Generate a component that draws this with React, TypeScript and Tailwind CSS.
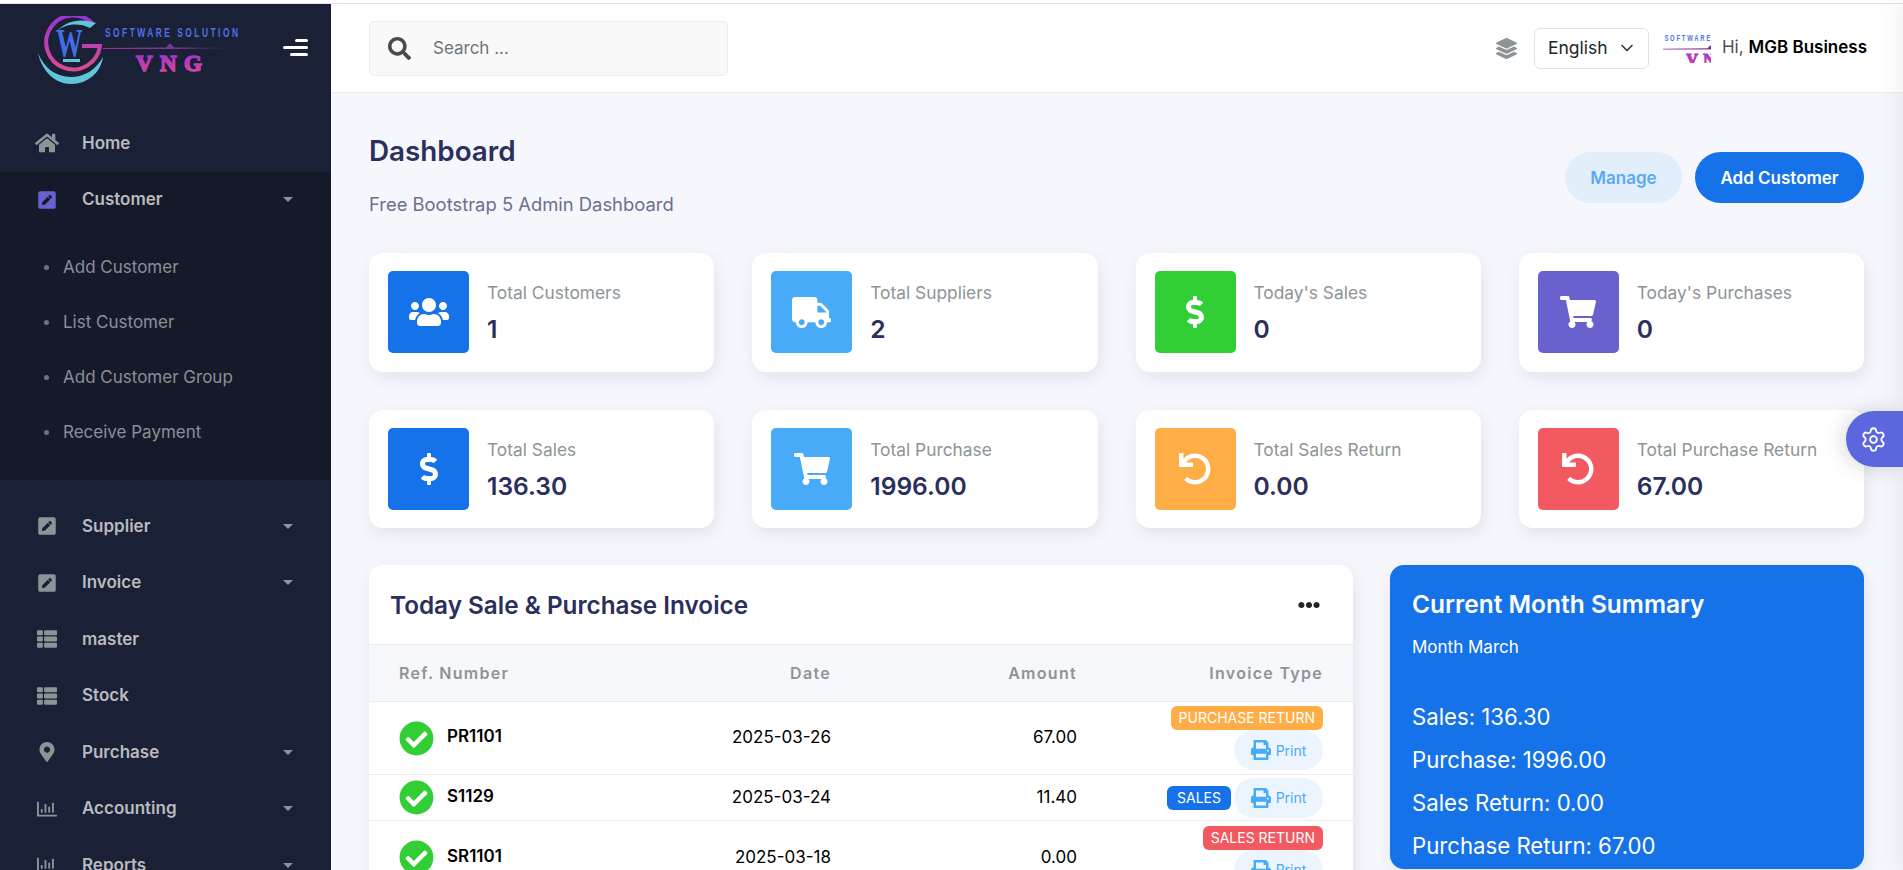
import React from 'react';
import {
  FaHome, FaPenSquare, FaThList, FaMapMarkerAlt, FaRegChartBar, FaSearch, FaLayerGroup,
  FaUsers, FaTruck, FaDollarSign, FaShoppingCart, FaUndo, FaEllipsisH, FaCheckCircle, FaPrint,
} from 'react-icons/fa';
import { ChevronDown, Settings } from 'lucide-react';

const font = { fontFamily: 'Inter, "Liberation Sans", sans-serif' };

const Logo = ({ viewBox, width, height, id }: { viewBox: string; width: number; height: number; id: string }) => (
  <svg viewBox={viewBox} width={width} height={height} preserveAspectRatio="none">
    <defs>
      <linearGradient id={`${id}-g`} x1="0" y1="0" x2="0" y2="1">
        <stop offset="0" stopColor="#9a32d6" />
        <stop offset="1" stopColor="#d84c8e" />
      </linearGradient>
      <linearGradient id={`${id}-l`} x1="0" y1="0" x2="1" y2="0">
        <stop offset="0" stopColor="#8a3a9a" />
        <stop offset="0.6" stopColor="#7a3590" />
        <stop offset="1" stopColor="#1a2035" />
      </linearGradient>
    </defs>
    <path d="M93 24 A27 27 0 1 0 100 46 L82 46" fill="none" stroke={`url(#${id}-g)`} strokeWidth="4" />
    <path d="M38 53 C42 72 56 84 71 84 C88 84 101 72 103 57 C96 70 84 77 71 77 C56 77 44 68 38 53 Z" fill="#5ec5da" />
    <path d="M56 32 C64 24 78 22 90 28 L96 23 C82 18 66 20 56 32 Z" fill="#5ec5da" />
    <text transform="translate(56 56) scale(0.95 1.45)" fontFamily='"Liberation Serif", serif' fontWeight="700" fontSize="28" fill="#3f6ee8">W</text>
    <rect x="63" y="59" width="17" height="3" fill="#5ec5da" />
    <text transform="translate(105 37) scale(0.7 1)" textLength="190" lengthAdjust="spacing" fontFamily='"Liberation Sans", sans-serif' fontWeight="700" fontSize="12" fill="#4f70e8">SOFTWARE SOLUTION</text>
    <path d="M103 48 L166 47.5 L170 43 L174 47.5 L240 48 L174 49 L103 49 Z" fill={`url(#${id}-l)`} />
    <text x="136" y="71" textLength="66" lengthAdjust="spacing" fontFamily='"Liberation Serif", serif' fontWeight="700" fontSize="23" stroke={`url(#${id}-g)`} strokeWidth="1.6" fill={`url(#${id}-g)`}>VNG</text>
  </svg>
);

const Caret = () => (
  <span className="ml-auto h-0 w-0 border-x-[5px] border-t-[5px] border-x-transparent border-t-[#8d9498]" />
);

const NavRow = ({ icon, label, caret }: { icon: React.ReactNode; label: string; caret?: boolean }) => (
  <div className="flex h-[56.5px] items-center pl-[37px] pr-[38px] text-[17px] font-semibold text-[#b9babf]">
    <span className="flex w-[20px] justify-center">{icon}</span>
    <span className="ml-[25px]">{label}</span>
    {caret && <Caret />}
  </div>
);

const Sidebar = () => (
  <aside className="w-[331px] shrink-0 bg-[#1a2035]">
    <div className="flex h-[111px] justify-between pl-[38px] pr-[23px] pt-[12px]">
      <Logo id="side" viewBox="38 16 202 70" width={202} height={70} />
      <div className="mt-[23px] flex h-[17px] w-[25px] flex-col items-end justify-between">
        <span className="h-[3px] w-[13px] rounded-sm bg-white" />
        <span className="h-[3px] w-[25px] rounded-sm bg-white" />
        <span className="h-[3px] w-[18px] rounded-sm bg-white" />
      </div>
    </div>
    <NavRow icon={<FaHome size={24} className="shrink-0 text-[#8d9498]" />} label="Home" />
    <div className="mb-[18px] bg-[#151a2a]">
      <NavRow icon={<FaPenSquare size={20} className="text-[#6861ce]" />} label="Customer" caret />
      <div className="pb-[20px] pt-[12px]">
        {['Add Customer', 'List Customer', 'Add Customer Group', 'Receive Payment'].map((item) => (
          <div key={item} className="flex h-[55px] items-center pl-[44px] text-[17px] text-[#8b8f98]">
            <span className="h-[5px] w-[5px] rounded-full bg-[#6f737c]" />
            <span className="ml-[14px]">{item}</span>
          </div>
        ))}
      </div>
    </div>
    <NavRow icon={<FaPenSquare size={20} className="text-[#8d9498]" />} label="Supplier" caret />
    <NavRow icon={<FaPenSquare size={20} className="text-[#8d9498]" />} label="Invoice" caret />
    <NavRow icon={<FaThList size={20} className="text-[#8d9498]" />} label="master" />
    <NavRow icon={<FaThList size={20} className="text-[#8d9498]" />} label="Stock" />
    <NavRow icon={<FaMapMarkerAlt size={20} className="text-[#8d9498]" />} label="Purchase" caret />
    <NavRow icon={<FaRegChartBar size={20} className="text-[#8d9498]" />} label="Accounting" caret />
    <NavRow icon={<FaRegChartBar size={20} className="text-[#8d9498]" />} label="Reports" caret />
  </aside>
);

const Header = () => (
  <header className="flex h-[89px] shrink-0 items-center border-b border-[#ebecec] bg-white pl-[38px] pr-[36px]">
    <div className="flex h-[55px] w-[359px] items-center rounded-[5px] border border-[#ebedf2] bg-[#f9f9f9] pl-[18px]">
      <FaSearch size={23} className="text-[#4b4b4b]" />
      <span className="ml-[22px] pt-[1px] text-[17px] text-[#6c757d]">Search ...</span>
    </div>
    <div className="ml-auto flex items-center">
      <FaLayerGroup size={21} className="text-[#8d9498]" />
      <div className="ml-[17px] flex h-[41px] w-[115px] items-center rounded-[6px] border border-[#dee2e6] pl-[13px] text-[17.5px] text-[#212529]">
        English
        <ChevronDown size={20} strokeWidth={2} className="ml-[9px] text-[#343a40]" />
      </div>
      <div className="ml-[14px] h-[30px] w-[48px] overflow-hidden">
        <Logo id="top" viewBox="103 26 68 42" width={48} height={30} />
      </div>
      <span className="ml-[11px] text-[17px] text-[#495057]">Hi,</span>
      <span className="ml-[5px] text-[17px] font-semibold text-black">MGB Business</span>
    </div>
  </header>
);

const stats = [
  { label: 'Total Customers', value: '1', bg: 'bg-[#1572e8]', icon: <FaUsers size={40} /> },
  { label: 'Total Suppliers', value: '2', bg: 'bg-[#48abf7]', icon: <FaTruck size={39} /> },
  { label: "Today's Sales", value: '0', bg: 'bg-[#31ce36]', icon: <FaDollarSign size={32} /> },
  { label: "Today's Purchases", value: '0', bg: 'bg-[#6861ce]', icon: <FaShoppingCart size={36} /> },
  { label: 'Total Sales', value: '136.30', bg: 'bg-[#1572e8]', icon: <FaDollarSign size={32} /> },
  { label: 'Total Purchase', value: '1996.00', bg: 'bg-[#48abf7]', icon: <FaShoppingCart size={36} /> },
  { label: 'Total Sales Return', value: '0.00', bg: 'bg-[#ffad46]', icon: <FaUndo size={32} /> },
  { label: 'Total Purchase Return', value: '67.00', bg: 'bg-[#f25961]', icon: <FaUndo size={32} /> },
];

const PrintButton = () => (
  <div className="flex h-[40px] w-[89px] shrink-0 items-center justify-center gap-[5px] rounded-full bg-[#ecf5fe] text-[14px] text-[#48abf7]">
    <FaPrint size={20} />
    Print
  </div>
);

const Badge = ({ label, color }: { label: string; color: string }) => (
  <span className={`flex h-[24px] shrink-0 items-center rounded-[6px] text-[14px] leading-none text-white ${color}`}>{label}</span>
);

const Ref = ({ value }: { value: string }) => (
  <div className="flex items-center">
    <FaCheckCircle size={35} className="text-[#31ce36]" />
    <span className="ml-[13px] -mt-[2px] text-[17px] font-semibold text-black">{value}</span>
  </div>
);

const rowGrid = 'grid grid-cols-[232px_200px_246px_247px] items-center pl-[30px] pr-[29px]';

const InvoiceCard = () => (
  <div className="w-[984px] shrink-0 rounded-[14px] bg-white shadow-[2px_6px_15px_0_rgba(69,65,78,0.1)]">
    <div className="flex h-[80px] items-center justify-between border-b border-[#ebecec] pl-[21px] pr-[33px]">
      <h3 className="mt-[2px] text-[24.3px] font-semibold text-[#2a2f5b]">Today Sale &amp; Purchase Invoice</h3>
      <FaEllipsisH size={22} className="text-[#212529]" />
    </div>
    <div className={`${rowGrid} h-[57px] border-b border-[#ebecec] bg-[#f7f8fb] text-[16px] font-semibold tracking-[1.3px] text-[#8d9498]`}>
      <span>Ref. Number</span>
      <span className="text-right">Date</span>
      <span className="text-right">Amount</span>
      <span className="pr-[1px] text-right">Invoice Type</span>
    </div>
    <div className={`${rowGrid} h-[73px] border-b border-[#ebecec] text-[17px] text-black`}>
      <Ref value="PR1101" />
      <span className="text-right">2025-03-26</span>
      <span className="text-right">67.00</span>
      <div className="flex flex-col items-end pr-[1px]">
        <Badge label="PURCHASE RETURN" color="bg-[#ffad46] px-[8px]" />
        <PrintButton />
      </div>
    </div>
    <div className={`${rowGrid} h-[46px] border-b border-[#ebecec] text-[17px] text-black`}>
      <Ref value="S1129" />
      <span className="text-right">2025-03-24</span>
      <span className="text-right">11.40</span>
      <div className="flex items-center justify-end gap-[3px] pr-[1px]">
        <Badge label="SALES" color="bg-[#1572e8] px-[10px]" />
        <PrintButton />
      </div>
    </div>
    <div className={`${rowGrid} h-[73px] text-[17px] text-black`}>
      <Ref value="SR1101" />
      <span className="text-right">2025-03-18</span>
      <span className="text-right">0.00</span>
      <div className="flex flex-col items-end pr-[1px]">
        <Badge label="SALES RETURN" color="bg-[#f25961] px-[8px]" />
        <PrintButton />
      </div>
    </div>
  </div>
);

const SummaryCard = () => (
  <div className="ml-[37px] h-[304px] w-[474px] shrink-0 rounded-[14px] bg-[#1572e8] pl-[22px] pt-[23px] text-white shadow-[2px_6px_15px_0_rgba(69,65,78,0.1)]">
    <h3 className="text-[24.5px] font-semibold leading-[32px]">Current Month Summary</h3>
    <p className="mt-[15px] text-[17px] leading-[24px]">Month March</p>
    <div className="mt-[36px] flex flex-col text-[22.2px] leading-[43px]">
      <span>Sales: 136.30</span>
      <span>Purchase: 1996.00</span>
      <span>Sales Return: 0.00</span>
      <span>Purchase Return: 67.00</span>
    </div>
  </div>
);

export default function App() {
  return (
    <div className="relative h-[870px] w-full overflow-hidden bg-white" style={font}>
      <div className="h-[4px] border-b border-[#e2e2e2] bg-white" />
      <div className="flex h-[866px]">
        <Sidebar />
        <main className="flex min-w-0 flex-1 flex-col bg-[#f5f7fd]">
          <Header />
          <div className="pl-[38px] pr-[39px] pt-[40px]">
            <div className="flex items-start justify-between">
              <div>
                <h1 className="mt-[1px] text-[27.8px] font-semibold leading-[34px] text-[#2a2f5b]">Dashboard</h1>
                <p className="mt-[25px] text-[18.4px] leading-[23px] text-[#6b7090]">Free Bootstrap 5 Admin Dashboard</p>
              </div>
              <div className="mt-[19px] flex gap-[13px] text-[17px] font-semibold">
                <button className="h-[51px] w-[117px] rounded-full bg-[#e3eefc] pt-[2px] text-[#5aa9f7]">Manage</button>
                <button className="h-[51px] w-[169px] rounded-full bg-[#1572e8] pt-[2px] text-white">Add Customer</button>
              </div>
            </div>
            <div className="mt-[37px] grid grid-cols-4 gap-x-[38px] gap-y-[38px]">
              {stats.map((s) => (
                <div key={s.label} className="flex h-[118.5px] items-center rounded-[14px] bg-white pl-[19px] shadow-[2px_6px_15px_0_rgba(69,65,78,0.1)]">
                  <div className={`flex h-[82px] w-[81px] shrink-0 items-center justify-center rounded-[5px] text-white ${s.bg}`}>{s.icon}</div>
                  <div className="ml-[18px]">
                    <p className="text-[17.35px] leading-[24px] text-[#8d9498]">{s.label}</p>
                    <p className="mt-[10px] text-[24.6px] font-semibold leading-[28px] text-[#2a2f5b]">{s.value}</p>
                  </div>
                </div>
              ))}
            </div>
            <div className="mt-[37px] flex items-start">
              <InvoiceCard />
              <SummaryCard />
            </div>
          </div>
        </main>
      </div>
      <div className="absolute right-[-325px] top-0 h-full w-[325px] bg-white shadow-[-1px_1px_24px_0_rgba(69,65,78,0.1)]" />
      <div className="absolute right-0 top-[411px] flex h-[56px] w-[57px] items-center justify-center rounded-l-[28px] bg-[#5c67de] pr-[2px] text-white shadow-[-3px_1px_20px_rgba(69,65,78,0.2)]">
        <Settings size={27} strokeWidth={1.6} />
      </div>
    </div>
  );
}
